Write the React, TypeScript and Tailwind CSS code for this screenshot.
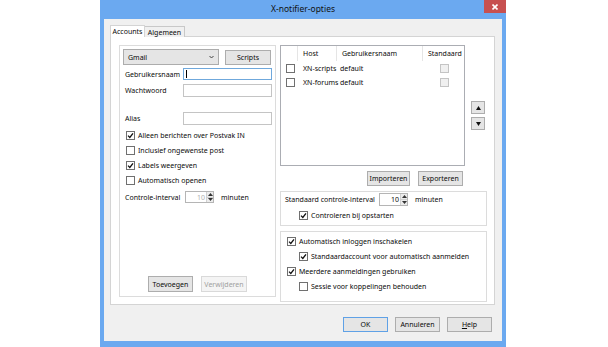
import React from "react";

const F = { fontFamily: '"Noto Sans", "Open Sans", sans-serif' };

function Check({ checked = false, disabled = false }: { checked?: boolean; disabled?: boolean }) {
  return (
    <div
      className={
        "w-[9px] h-[9px] shrink-0 border flex items-center justify-center " +
        (disabled ? "border-[#c4c4c4] bg-[#f0f0f0]" : "border-[#707070] bg-white")
      }
    >
      {checked && (
        <svg width="7" height="7" viewBox="0 0 7 7">
          <path d="M1 3.6 L2.8 5.4 L6 1.3" fill="none" stroke="#111" strokeWidth="1.3" />
        </svg>
      )}
    </div>
  );
}

function CheckRow({ label, checked, indent = false }: { label: string; checked?: boolean; indent?: boolean }) {
  return (
    <div className={"h-[15px] flex items-center gap-[3px] " + (indent ? "pl-[12px]" : "")}>
      <Check checked={checked} />
      <span>{label}</span>
    </div>
  );
}

function Btn({ label, w, disabled = false, def = false, h = "h-[15px]" }: { label: React.ReactNode; w: string; disabled?: boolean; def?: boolean; h?: string }) {
  return (
    <div
      className={
        w +
        " " +
        h +
        " shrink-0 border flex items-center justify-center " +
        (disabled
          ? "border-[#d9d9d9] bg-[#f4f4f4] text-[#a0a0a0]"
          : def
          ? "border-[#5fa1e6] bg-[#e5e5e5] text-[#0a0a0a]"
          : "border-[#adadad] bg-[#e5e5e5] text-[#0a0a0a]")
      }
    >
      {label}
    </div>
  );
}

function Spin({ value, disabled = false, h = "h-[12px]" }: { value: string; disabled?: boolean; h?: string }) {
  return (
    <div className={"w-[29px] " + h + " border border-[#b5b5b5] bg-white flex"}>
      <div className={"flex-1 flex items-center justify-end pr-[1px] " + (disabled ? "text-[#b0b0b0]" : "text-[#0a0a0a]")}>
        {value}
      </div>
      <div className="w-[7px] flex flex-col border-l border-[#d0d0d0] bg-[#ececec]">
        <div className="flex-1 flex items-center justify-center border-b border-[#d0d0d0]">
          <svg width="5" height="3" viewBox="0 0 5 3"><path d="M0 3 L2.5 0 L5 3Z" fill="#333" /></svg>
        </div>
        <div className="flex-1 flex items-center justify-center">
          <svg width="5" height="3" viewBox="0 0 5 3"><path d="M0 0 L2.5 3 L5 0Z" fill="#333" /></svg>
        </div>
      </div>
    </div>
  );
}

export default function App() {
  return (
    <div className="w-[608px] h-[347px] bg-white flex pl-[100px] overflow-hidden text-[7px] text-[#0a0a0a] leading-none" style={F}>
      <div className="w-[406px] h-[347px] bg-[#6ba9f0] flex flex-col shrink-0">
        {/* title bar */}
        <div className="h-[19px] relative flex items-center justify-center">
          <span className="text-[8.5px] text-[#111]">X-notifier-opties</span>
          <div className="absolute right-0 top-0 w-[22px] h-[13px] bg-[#c75050] flex items-center justify-center">
            <svg width="6" height="6" viewBox="0 0 6 6">
              <path d="M0.5 0.5 L5.5 5.5 M5.5 0.5 L0.5 5.5" stroke="#fff" strokeWidth="1.6" />
            </svg>
          </div>
        </div>
        {/* client */}
        <div className="mx-[4px] h-[322px] bg-[#f0f0f0] flex flex-col pl-[6px] pt-[6px]">
          {/* tabs */}
          <div className="h-[12px] flex items-end relative z-10">
            <div className="w-[35px] h-[12px] bg-white border border-[#d4d4d4] border-b-0 flex items-center justify-center pb-[1px]">
              Accounts
            </div>
            <div className="w-[40px] h-[11px] bg-[#f0f0f0] border border-[#c8c8c8] border-l-0 border-b-0 flex items-center justify-center">
              Algemeen
            </div>
          </div>
          {/* panel */}
          <div className="w-[385px] h-[269px] -mt-px border border-[#d4d4d4] bg-white flex pt-[8px] pl-[8px]">
            {/* left group */}
            <div className="w-[157px] h-[252px] border border-[#dcdcdc] flex flex-col pl-[3px]">
              <div className="mt-[3px] h-[16px] flex items-center">
                <div className="w-[96px] h-[16px] border border-[#acacac] bg-[#e5e5e5] flex items-center justify-between px-[4px]">
                  <span>Gmail</span>
                  <svg width="5" height="4" viewBox="0 0 5 4"><path d="M0.5 1 L2.5 3 L4.5 1" fill="none" stroke="#444" strokeWidth="1" /></svg>
                </div>
                <div className="ml-[6px]">
                  <Btn label="Scripts" w="w-[46px]" />
                </div>
              </div>
              <div className="mt-[3px] h-[12px] flex items-center">
                <span className="w-[60px] pl-[2px]">Gebruikersnaam</span>
                <div className="w-[89px] h-[12px] border border-[#6fa8dc] bg-white flex items-center pl-[2px]">
                  <div className="w-px h-[8px] bg-black" />
                </div>
              </div>
              <div className="mt-[4px] h-[13px] flex items-center">
                <span className="w-[60px] pl-[2px]">Wachtwoord</span>
                <div className="w-[89px] h-[13px] border border-[#c4c4c4] bg-white" />
              </div>
              <div className="mt-[15px] h-[13px] flex items-center">
                <span className="w-[60px] pl-[2px]">Alias</span>
                <div className="w-[89px] h-[13px] border border-[#c4c4c4] bg-white" />
              </div>
              <div className="mt-[3px] pl-[3px] flex flex-col">
                <CheckRow label="Alleen berichten over Postvak IN" checked />
                <CheckRow label="Inclusief ongewenste post" />
                <CheckRow label="Labels weergeven" checked />
                <CheckRow label="Automatisch openen" />
              </div>
              <div className="mt-[3px] h-[12px] flex items-center">
                <span className="w-[62px] pl-[2px]">Controle-interval</span>
                <Spin value="10" disabled />
                <span className="ml-[7px]">minuten</span>
              </div>
              <div className="mt-auto mb-[4px] flex justify-center gap-[8px] pr-[3px]">
                <Btn label="Toevoegen" w="w-[45px]" h="h-[16px]" />
                <Btn label="Verwijderen" w="w-[46px]" h="h-[16px]" disabled />
              </div>
            </div>
            {/* right column */}
            <div className="ml-[4px] w-[207px] flex flex-col">
              <div className="flex">
                <div className="w-[185px] h-[121px] border border-[#abadb3] bg-white flex flex-col">
                  <div className="h-[15px] flex items-center">
                    <div className="w-[17px] h-full border-r border-[#e5e5e5]" />
                    <div className="w-[39px] h-full border-r border-[#e5e5e5] flex items-center pl-[5px]">Host</div>
                    <div className="w-[86px] h-full border-r border-[#e5e5e5] flex items-center pl-[5px]">Gebruikersnaam</div>
                    <div className="w-[40px] h-full flex items-center pl-[5px]">Standaard</div>
                  </div>
                  {[
                    ["XN-scripts", "default"],
                    ["XN-forums", "default"],
                  ].map(([h, u]) => (
                    <div key={h} className="h-[14px] flex items-center">
                      <div className="w-[17px] flex justify-center pl-[1px]">
                        <Check />
                      </div>
                      <div className="w-[39px] pl-[5px] whitespace-nowrap">{h}</div>
                      <div className="w-[86px] pl-[3px]">{u}</div>
                      <div className="w-[40px] flex justify-center pl-[2px]">
                        <Check disabled />
                      </div>
                    </div>
                  ))}
                </div>
                <div className="ml-[6px] mt-[56px] flex flex-col gap-[3px]">
                  <div className="w-[14px] h-[13px] border border-[#adadad] bg-[#e5e5e5] flex items-center justify-center">
                    <svg width="5" height="4" viewBox="0 0 5 4"><path d="M0 4 L2.5 0 L5 4Z" fill="#111" /></svg>
                  </div>
                  <div className="w-[14px] h-[13px] border border-[#adadad] bg-[#e5e5e5] flex items-center justify-center">
                    <svg width="5" height="4" viewBox="0 0 5 4"><path d="M0 0 L2.5 4 L5 0Z" fill="#111" /></svg>
                  </div>
                </div>
              </div>
              <div className="mt-[5px] flex justify-end gap-[8px] pr-[24px]">
                <Btn label="Importeren" w="w-[43px]" />
                <Btn label="Exporteren" w="w-[45px]" />
              </div>
              <div className="mt-[5px] h-[35px] border border-[#dcdcdc] flex flex-col pl-[4px] pt-[1px]">
                <div className="h-[13px] flex items-center">
                  <span className="w-[94px]">Standaard controle-interval</span>
                  <Spin value="10" h="h-[13px]" />
                  <span className="ml-[7px]">minuten</span>
                </div>
                <div className="mt-[3px] pl-[14px] h-[12px] flex items-center gap-[3px]">
                  <Check checked />
                  <span>Controleren bij opstarten</span>
                </div>
              </div>
              <div className="mt-[5px] h-[71px] border border-[#dcdcdc] flex flex-col pl-[6px] pt-[2px]">
                <CheckRow label="Automatisch inloggen inschakelen" checked />
                <CheckRow label="Standaardaccount voor automatisch aanmelden" checked indent />
                <CheckRow label="Meerdere aanmeldingen gebruiken" checked />
                <CheckRow label="Sessie voor koppelingen behouden" indent />
              </div>
            </div>
          </div>
          {/* dialog buttons */}
          <div className="mt-[12px] flex justify-end gap-[7px] pr-[10px]">
            <Btn label="OK" w="w-[45px]" def />
            <Btn label="Annuleren" w="w-[45px]" />
            <Btn label={<span><span className="underline">H</span>elp</span>} w="w-[45px]" />
          </div>
        </div>
      </div>
    </div>
  );
}
